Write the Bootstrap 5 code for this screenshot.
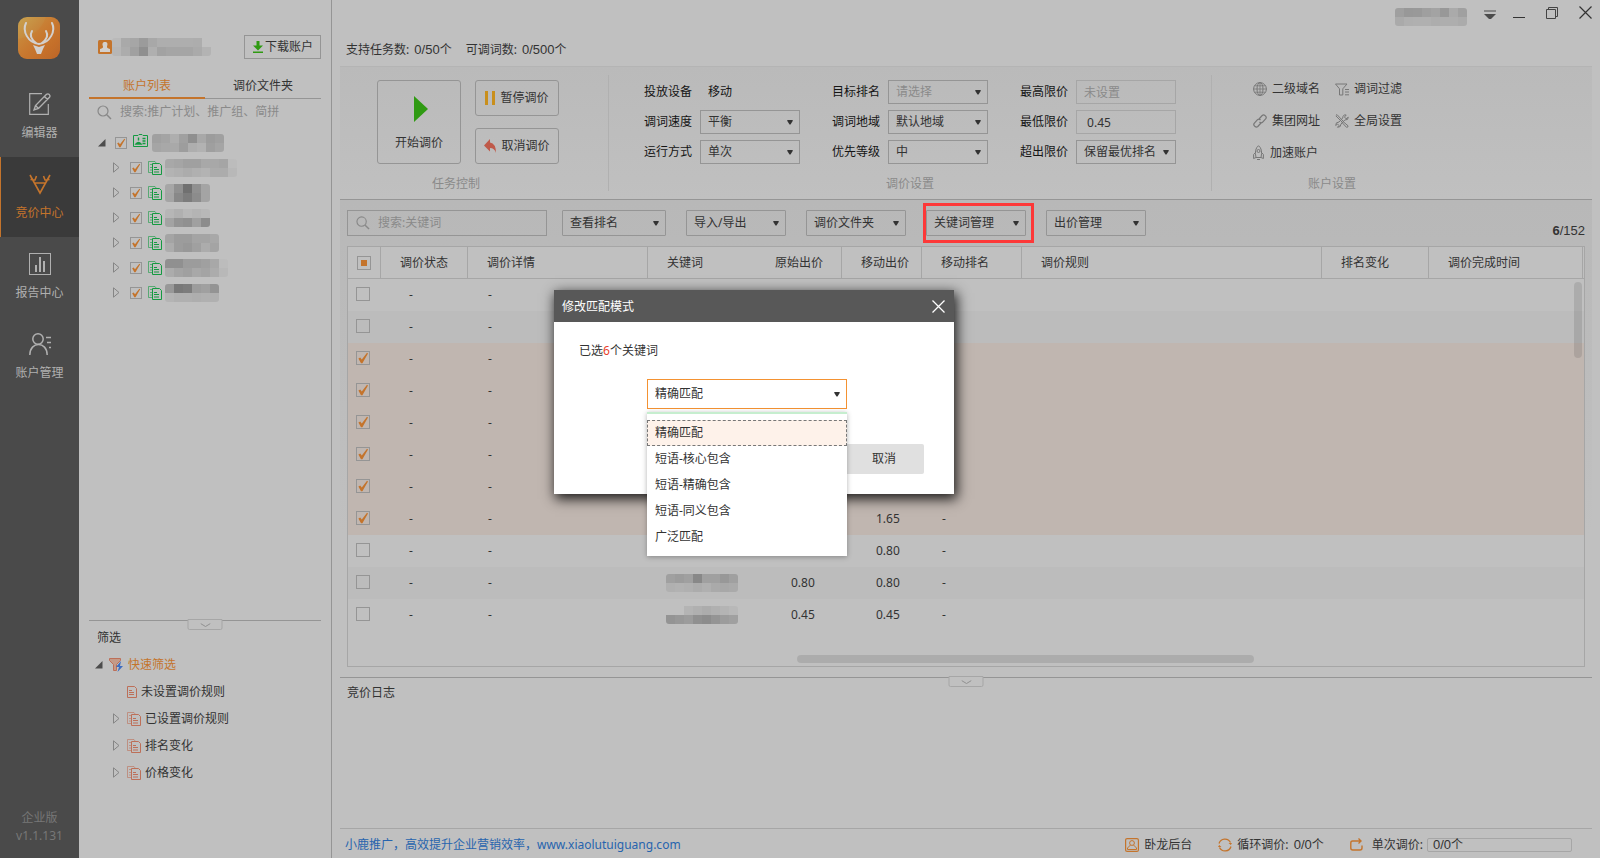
<!DOCTYPE html>
<html lang="zh-CN">
<head>
<meta charset="utf-8">
<meta name="viewport" content="width=device-width, initial-scale=1">
<title>竞价中心</title>
<link href="https://cdn.jsdelivr.net/npm/bootstrap@5.3.0/dist/css/bootstrap.min.css" rel="stylesheet">
<style>
:root{--ink:#333;--line:#959595;--soft:#a6a6a6;--base:#c0c0c0;--accent:#c4742c;--dim:#8a8a8a}
body{font:12px/18px "Noto Sans","Noto Sans CJK SC",sans-serif;color:var(--ink);background:var(--base)}
svg{display:block;flex:none}
a{color:inherit;text-decoration:none}
.num{font-family:"Liberation Sans",sans-serif;font-size:13px}
/* navigation rail */
.rail{width:79px;background:#4a4a4a;color:#b0b0b0;padding-top:17px}
.rail .logo{margin:0 0 18px 18px}
.rail .nav-link{height:80px;padding:16px 0 0;color:#b0b0b0;border-radius:0;gap:9px;display:flex;flex-direction:column;align-items:center}
.rail .nav-link.active{background:#3a3a3a;color:var(--accent);box-shadow:inset 1px 0 var(--accent)}
.ver{color:#777;padding-bottom:13px}
/* account panel */
.side{width:253px;border-right:1px solid var(--line);padding:35px 10px 0}
.owner{padding-left:9px;margin-bottom:14px}
.plain{background:transparent;border:1px solid var(--line);color:var(--ink);font-size:12px;line-height:18px;padding:0;border-radius:0}
.plain:hover{background:#b8b8b8;color:var(--ink);border-color:var(--line)}
.dl{width:77px;height:24px;gap:1px}
.tabs .nav-link{height:26px;padding:4px 0 0;color:var(--ink);border-bottom:1px solid var(--line);border-radius:0;width:50%;text-align:center}
.tabs .nav-link.active{color:var(--accent);border-bottom:2px solid var(--accent)}
.find{background:transparent;border:0;padding:0;font-size:12px;line-height:18px;color:var(--ink);outline:0;box-shadow:none;border-radius:0;min-height:0}
.find:focus{background:transparent;box-shadow:none}
.find::placeholder,.blank::placeholder{color:var(--dim);opacity:1}
.tree{padding-left:9px;margin-top:9px}
.tree li{height:25px;display:flex;align-items:center;gap:3px}
.tree .twig{width:18px}
.tree .kid{padding-left:15px}
.tree .pic{margin-left:3px}
.filters{border-top:1px solid var(--line);height:238px;padding-top:8px;position:relative}
.filters li{height:27px;display:flex;align-items:center;gap:4px}
.filters li .twig{width:10px}
.grip{position:absolute;top:-2px;left:50%;transform:translateX(-50%);width:35px;height:11px;padding:0;border:1px solid var(--soft);border-radius:0 0 2px 2px;background:var(--base);display:flex;align-items:center;justify-content:center}
.tick{appearance:none;width:12px;height:12px;margin:0;border:1px solid var(--line);border-radius:0;background:transparent center/contain no-repeat;flex:none;display:block}
.tick:checked{background-color:transparent;border-color:var(--line);background-image:url("data:image/svg+xml,%3Csvg xmlns='http://www.w3.org/2000/svg' viewBox='0 0 12 12'%3E%3Cpath d='M1.4 6.4 3.200 5.400 4.800 7.600 10 .8 11 1.400 5.400 11.200 4 11.200Z' fill='%23c4742c'/%3E%3C/svg%3E")}
.tick.big{width:14px;height:14px}
.tick.some:checked{background-image:linear-gradient(var(--accent),var(--accent));background-size:6px 6px}
/* ribbon */
.work{padding:0 8px}
.topbar{height:33px;gap:17px}
.topbar button{border:0;background:none;padding:0}
.counts{height:33px;padding:0 6px;gap:14px}
.counts .num,.status .num{margin-left:2px}
.ribbon{border-top:1px solid #b4b4b4;border-bottom:1px solid var(--line);background:linear-gradient(#bababa,#c0c0c0);height:134px}
.sep{width:1px;background:#b0b0b0;margin:8px 0}
.group{padding-top:13px}
.cap{color:var(--dim);margin-top:11px;text-align:center}
.tool{border-radius:3px;width:84px;height:36px}
.tool.tall{height:84px}
.field{display:flex;align-items:center;gap:8px;color:#151515;height:24px}
.pick,.blank{appearance:none;height:24px;width:100px;padding:0 0 0 7px;font-size:12px;line-height:18px;border:1px solid var(--line);border-radius:0;color:var(--ink);background-color:transparent}
.pick,.menu{background-image:url("data:image/svg+xml,%3Csvg xmlns='http://www.w3.org/2000/svg' viewBox='0 0 6 5'%3E%3Cpath d='M.3 0h5.400v1L3.500 4.500h-1L.3 1z' fill='%23333'/%3E%3C/svg%3E");background-repeat:no-repeat;background-size:6px 5px;background-position:right 6px center}
.blank{border-color:var(--soft)}
.pick.none{color:var(--dim)}
.menu,.pick.wide{height:26px;text-align:left;padding-left:7px;border-radius:1px}
.menu{width:100px}
.links{display:grid;grid-template-columns:82px 1fr;row-gap:16px;height:84px;align-content:start;padding:1px 0 0 41px}
.links a{display:flex;align-items:center;gap:5px;height:16px}
/* keyword grid */
.desk{background:linear-gradient(#b8b8b8,#c0c0c0 70%);padding:10px 7px}
.bar{height:30px;margin-bottom:6px}
.seek{width:200px;height:26px;border:1px solid var(--line);padding-left:8px;gap:8px}
.mark-box{position:relative}
.mark-box::after{content:"";position:absolute;inset:-7px -8px -7px -3px;border:3px solid #fd3838;pointer-events:none}
.sheet{border:1px solid var(--soft);background:var(--base);position:relative;padding-bottom:35px}
.sheet table{table-layout:fixed;width:100%;margin:0;border-collapse:separate;border-spacing:0}
.sheet th{height:32px;padding:1px 0 0 19px;font-weight:400;border-right:1px solid var(--soft);border-bottom:1px solid var(--soft);white-space:nowrap}
.sheet th.open{border-right:0}
.sheet th:first-child{padding-left:9px}
.sheet td{height:32px;padding:0 0 0 20px}
.sheet td:first-child{padding:0 0 2px 8px}
.sheet tr.alt{background:#bcbcbc}
.sheet tr.on{background:#c0b6b0}
.sheet td:nth-child(2){padding-left:28px}
.sheet td:nth-child(5){padding-left:35px}
.sheet td:nth-child(6){padding-left:34px}
.sheet td:nth-child(4){padding-left:18px}
.thumb{position:absolute;background:rgba(0,0,0,.1);border-radius:5px}
.thumb.v{right:2px;top:35px;width:8px;height:76px}
.thumb.h{left:449px;bottom:3px;width:37%;height:8px}
.log{border-top:1px solid var(--line);padding:6px 7px;position:relative}
.status{border-top:1px solid var(--soft);height:30px;padding-top:2px}
.meter-box{width:145px;height:14px;border:1px solid var(--soft);border-radius:2px;padding-left:3px;line-height:12px;margin-right:20px}
/* dialog over the page */
.dlg{position:absolute;left:554px;top:290px;width:400px;height:204px;background:#fff;box-shadow:2px 4px 12px 1px rgba(0,0,0,.85)}
.dlg-head{height:32px;background:#585858;color:#fff;padding:1px 9px 0 8px}
.dlg-head button{border:0;background:none;padding:0}
.dlg-body{padding:20px 30px 20px 25px}
.match{position:relative;width:200px;margin:19px 0 35px 68px}
.match .pick{width:200px;height:30px;border-color:#f49232}
.opts{position:absolute;top:33px;left:0;width:200px;padding:6px 0;background:#fff;border-top:2px solid #c6eecf;box-shadow:0 1px 5px rgba(0,0,0,.3);z-index:2}
.opts li{height:26px;padding:3px 7px;border:1px dashed transparent}
.opts li.cur{background:#fef2ea;border-color:#777}
.no{width:80px;height:30px;border:0;background:#e0e0e0;border-radius:2px;font-size:12px;padding:0;color:var(--ink)}
</style>
</head>
<body>
<svg width="0" height="0" class="position-absolute" aria-hidden="true">
  <defs>
    <symbol id="shut" viewBox="0 0 7 11"><path d="M.5.8v9.4L6 5.5z" fill="none" stroke="#858585"/></symbol>
    <symbol id="open" viewBox="0 0 8 8"><path d="M7.5 0v7.5H0z" fill="#4c4c4c"/></symbol>
    <symbol id="pages" viewBox="0 0 14 14"><path d="M4 11.500H.5v-11H7L8.500 2.500M2 3.500h2M2 6.500h2M2 9h2" fill="none" stroke="currentColor" opacity=".6"/><path d="M4.500 2.500h7l2 2v9h-9z" fill="none" stroke="currentColor"/><path d="M6 6.500h3M6 8.500h5M6 11h5" stroke="currentColor"/></symbol>
    <symbol id="page" viewBox="0 0 10 12"><path d="M.5.5H7.500l2 2v9h-9z" fill="none" stroke="currentColor"/><path d="M2 4.500h3M2 6.500h5M2 8.500h5" stroke="currentColor"/></symbol>
    <symbol id="lens" viewBox="0 0 15 15"><circle cx="6" cy="6" r="5" fill="none" stroke="#888" stroke-width="1.200"/><path d="m9.800 9.800 4.200 4.200" stroke="#888" stroke-width="1.500"/></symbol>
    <symbol id="fold" viewBox="0 0 10 4"><path d="m0 .5 5 3 5-3" fill="none" stroke="#909090"/></symbol>
  </defs>
</svg>
<div class="d-flex min-vh-100">
  <aside class="rail d-flex flex-column flex-shrink-0">
    <svg class="logo" width="42" height="42" viewBox="0 0 42 42"><defs><linearGradient id="lg" x1="0" y1="0" x2="1" y2="1"><stop offset="0" stop-color="#c8a350"/><stop offset=".5" stop-color="#c67c35"/><stop offset="1" stop-color="#bd6425"/></linearGradient></defs><rect width="42" height="42" rx="9" fill="url(#lg)"/><path d="M0 22Q22 18 28 0h5a9 9 0 0 1 9 9v14Q32 42 14 42H9a9 9 0 0 1-9-9z" fill="#d06e20" opacity=".2"/><g fill="none" stroke="#d3d0cd" stroke-width="2" stroke-linecap="round"><path d="M8 6C4 14 10 26 21 27 32 26 38 14 34 6"/><path d="M14 14c-3 5 0 9 4 12M28 14c3 5 0 9-4 12"/></g><path d="m15 28 6 2 6-2-2 4-2 5h-4l-2-5z" fill="#d3d0cd"/></svg>
    <nav class="nav flex-column">
      <a class="nav-link" href="#"><svg width="22" height="22" viewBox="0 0 22 22" fill="none" stroke="currentColor"><path d="M13 .7H.7v20.600h18.600V11" stroke-width="1.200"/><path d="m5 17 1.500-4.500L17.500 1.300q1.500-1 2.800.3 1.200 1.300.2 2.600L9.500 15.500zM15.500 3.500l3 3M6.500 12.500l3 3" stroke-width="1.400"/></svg>编辑器</a>
      <a class="nav-link active" href="#"><svg width="22" height="22" viewBox="0 0 22 22" fill="none" stroke="currentColor" stroke-width="1.600"><path d="m1 2 10 18L21 2M5.500 10h11M1.500 6.500 6 7 7.500 3M20.500 6.500 16 7l-1.500-4"/></svg>竞价中心</a>
      <a class="nav-link" href="#"><svg width="22" height="22" viewBox="0 0 22 22" fill="none" stroke="currentColor"><rect x=".5" y=".5" width="21" height="21"/><path d="M7 12v7M11 4v15M15 8v11" stroke-width="2"/></svg>报告中心</a>
      <a class="nav-link" href="#"><svg width="22" height="22" viewBox="0 0 22 22" fill="none" stroke="currentColor" stroke-width="1.500"><circle cx="9" cy="6" r="5.200"/><path d="M.8 22c0-14 17.400-14 17.400 0M17 4.500h5M18 9.500h4M20 14.500h2" /></svg>账户管理</a>
    </nav>
    <div class="ver mt-auto text-center">企业版<br>v1.1.131</div>
  </aside>

  <section class="side d-flex flex-column flex-shrink-0">
    <div class="owner d-flex align-items-center">
      <svg width="14" height="14" viewBox="0 0 14 14"><rect width="14" height="14" rx="1.500" fill="#c4742c"/><path d="M7 2c2.500 0 3 2 2 4.500Q8.500 8 12 9v3H2V9q3.500-1 3-2.500C4 4 4.500 2 7 2z" fill="#d3d0cd"/></svg>
      <svg class="mosaic" data-a="b9a9a69ba8aeaeaeaeadc0" data-b="b6aca08fafa2a5a5a5aab3"></svg>
      <button class="plain dl btn ms-auto d-flex align-items-center justify-content-center" type="button"><svg width="12" height="12" viewBox="0 0 12 12"><path d="M4.500 0h3v4.500H11L6 9.500 1 4.500h3.500zM1 10.500h10V12H1z" fill="#2f9a12"/></svg>下载账户</button>
    </div>
    <nav class="tabs nav flex-nowrap"><a class="nav-link active" href="#">账户列表</a><a class="nav-link" href="#">调价文件夹</a></nav>
    <label class="d-flex align-items-center ps-2 pt-1 gap-2"><svg width="15" height="15"><use href="#lens"/></svg><input class="find w-100" type="text" placeholder="搜索:推广计划、推广组、简拼" aria-label="搜索"></label>
    <ul class="tree list-unstyled mb-0" id="tree">
      <li><span style="width:14px"><svg width="8" height="8"><use href="#open"/></svg></span><input class="tick" type="checkbox" checked aria-label="全部账户"><span class="d-flex pic"><svg width="15" height="13" viewBox="0 0 15 13" fill="none" stroke="#149a41"><path d="M.5 1.500H5l1-1h3l1 1h4.500v11H.5z"/><path d="M3 10q2.500-3 5 0zM9.500 4.500h3M9.500 7h3M9.500 9.500h3M5.500 3.500v3" stroke-width="1.400"/></svg><svg class="mosaic ms-1" data-a="a0a4aea08fa89ca0" data-b="a5a8a99daeb29fa5"></svg></span></li>
    </ul>
    <div class="filters mt-auto">
      <button class="grip" type="button" aria-label="收起"><svg width="10" height="4"><use href="#fold"/></svg></button>
      <div class="ps-2 mb-1">筛选</div>
      <ul class="list-unstyled mb-0">
        <li style="padding-left:6px"><span class="twig"><svg width="8" height="8"><use href="#open"/></svg></span><svg width="15" height="14" viewBox="0 0 15 14"><path d="M.5.5h11v2l-4 4v6H4.500v-6l-4-4z" fill="#c49a88" stroke="#bd6f58"/><path d="m12 3-5 6h3l-1.500 5L14 8h-3z" fill="#3c6cc0"/></svg><a href="#" style="color:var(--accent)">快速筛选</a></li>
        <li class="ps-4"><span class="twig"></span><svg style="color:#bd6f58" width="10" height="12"><use href="#page"/></svg>未设置调价规则</li>
        <li class="ps-4"><span class="twig"><svg width="7" height="11"><use href="#shut"/></svg></span><svg style="color:#bd6f58" width="14" height="14"><use href="#pages"/></svg>已设置调价规则</li>
        <li class="ps-4"><span class="twig"><svg width="7" height="11"><use href="#shut"/></svg></span><svg style="color:#bd6f58" width="14" height="14"><use href="#pages"/></svg>排名变化</li>
        <li class="ps-4"><span class="twig"><svg width="7" height="11"><use href="#shut"/></svg></span><svg style="color:#bd6f58" width="14" height="14"><use href="#pages"/></svg>价格变化</li>
      </ul>
    </div>
  </section>

  <main class="work flex-grow-1 d-flex flex-column" style="min-width:0">
    <div class="topbar d-flex justify-content-end">
      <div class="d-flex" style="gap:17px">
        <svg class="mosaic mt-2" data-a="9f98999fa398aaa0" data-b="aaafb0b0adaeaeab"></svg>
        <button class="pb-1" type="button" aria-label="菜单"><svg width="12" height="10" viewBox="0 0 12 10"><path d="M0 1h12" stroke="#4c4c4c"/><path d="M0 4h12L7 9H5z" fill="#4c4c4c"/></svg></button>
      </div>
      <div class="d-flex" style="gap:21px">
        <button type="button" aria-label="最小化"><svg width="12" height="3"><path d="M0 2.500h12" stroke="#333"/></svg></button>
        <button class="pb-2" type="button" aria-label="还原"><svg width="12" height="12" viewBox="0 0 12 12" fill="none" stroke="#444"><path d="M.5 2.500h9v9h-9zM2.500 2.500v-2h9v9h-2"/></svg></button>
        <button class="pb-2" type="button" aria-label="关闭"><svg width="13" height="13" viewBox="0 0 13 13" stroke="#333" stroke-width="1.200"><path d="m.5.5 12 12M12.500.5l-12 12"/></svg></button>
      </div>
    </div>
    <div class="counts d-flex align-items-center"><span>支持任务数: <span class="num">0/50</span>个</span><span>可调词数: <span class="num">0/500</span>个</span></div>

    <div class="ribbon d-flex">
      <div class="group" style="width:268px;padding-left:37px">
        <div class="d-flex" style="gap:14px">
          <button class="btn plain tool tall d-flex flex-column align-items-center justify-content-center gap-2" type="button"><svg class="mt-1 mb-1 ms-1" width="14" height="26"><path d="M0 0v26l14-13z" fill="#2f9a12"/></svg>开始调价</button>
          <div class="d-flex flex-column justify-content-between">
            <button class="btn plain tool d-flex align-items-center justify-content-center" style="gap:5px" type="button"><svg width="10" height="14"><path d="M0 0h3v14H0zM7 0h3v14H7z" fill="#c98f1c"/></svg>暂停调价</button>
            <button class="btn plain tool d-flex align-items-center justify-content-center" style="gap:5px" type="button"><svg width="12" height="14" viewBox="0 0 12 14"><path d="M6 0v3.500q6 1 6 10.500Q10.500 9 6 9v3.500L0 6.500z" fill="#bf5a4a"/></svg>取消调价</button>
          </div>
        </div>
        <div class="cap pe-4" style="width:182px">任务控制</div>
      </div>
      <div class="sep"></div>
      <div class="group" style="width:602px">
        <div class="d-flex" style="gap:32px;padding-left:35px">
          <div class="d-grid" style="gap:6px">
            <div class="field"><span>投放设备</span><span class="ms-2 ps-0">移动</span></div>
            <label class="field">调词速度<select class="pick"><option>平衡</option></select></label>
            <label class="field">运行方式<select class="pick"><option>单次</option></select></label>
          </div>
          <div class="d-grid" style="gap:6px">
            <label class="field">目标排名<select class="pick none"><option>请选择</option></select></label>
            <label class="field">调词地域<select class="pick"><option>默认地域</option></select></label>
            <label class="field">优先等级<select class="pick"><option>中</option></select></label>
          </div>
          <div class="d-grid" style="gap:6px">
            <label class="field">最高限价<input class="blank" type="text" placeholder="未设置"></label>
            <label class="field">最低限价<input class="blank" style="padding-left:10px" type="text" value="0.45"></label>
            <label class="field">超出限价<select class="pick"><option>保留最优排名</option></select></label>
          </div>
        </div>
        <div class="cap">调价设置</div>
      </div>
      <div class="sep"></div>
      <div class="group" style="width:240px">
        <div class="links">
          <a href="#"><svg width="14" height="14" viewBox="0 0 14 14" fill="none" stroke="#777"><circle cx="7" cy="7" r="6.400"/><ellipse cx="7" cy="7" rx="3" ry="6.400"/><path d="M7 .5v13M.5 7h13M1.500 3.800h11M1.500 10.200h11" stroke-width=".8"/></svg>二级域名</a>
          <a href="#"><svg width="14" height="13" viewBox="0 0 14 13" fill="none" stroke="#777"><path d="M.5 1h11.500L7.800 5.800V12H4.500V5.800zM10 6.500h4M10 9h4M10 11.800h4"/></svg>调词过滤</a>
          <a href="#"><svg width="14" height="14" viewBox="0 0 14 14" fill="none" stroke="#777" stroke-width="1.200"><path d="M6 5 9.200 1.500Q10.500.3 12 1.500q2 1.500.8 3.200L9.500 8.300Q8 9.500 6.500 8M8 9 4.800 12.500Q3.500 13.700 2 12.500 0 11 1.200 9.300L4.500 5.700Q6 4.500 7.500 6"/></svg>集团网址</a>
          <a href="#"><svg width="14" height="14" viewBox="0 0 14 14" fill="none" stroke="#777"><path d="M.8 1.500 2 .6l6.500 7 M1 2l6.500 6.500M8 7.500l5 4.300q.5 1.500-1.500 1.500L7 8.500M13.300 3.200 11 4.800 9.500 3l1.700-2Q8 .2 7.700 4L4 8Q.5 8 .7 11.500L2.500 10 4 11.500 2.500 13.300Q6 13.500 6 10L9.800 6q3.700.2 3.500-2.800z"/></svg>全局设置</a>
          <a href="#" style="gap:6px"><svg width="11" height="16" viewBox="0 0 11 16" fill="none" stroke="#777"><path d="M3 12.500Q1 4 5.500.7 10 4 8 12.500zM2.500 7.500.6 9.500v4L3 12.500M8.500 7.500l1.900 2v4L8 12.500M4 14.500h3"/><circle cx="5.500" cy="6" r="1.500"/></svg>加速账户</a>
        </div>
        <div class="cap">账户设置</div>
      </div>
    </div>

    <div class="desk">
      <div class="bar d-flex align-items-start">
        <label class="seek d-flex align-items-center"><svg width="14" height="14"><use href="#lens"/></svg><input class="find w-100" type="text" placeholder="搜索:关键词" aria-label="搜索关键词"></label>
        <select class="pick wide" style="width:104px;margin-left:15px" aria-label="查看排名"><option>查看排名</option></select>
        <div class="d-flex" style="gap:20px;margin-left:20px">
          <button class="plain menu" type="button">导入/导出</button>
          <button class="plain menu" type="button">调价文件夹</button>
          <span class="mark-box"><button class="plain menu" type="button">关键词管理</button></span>
          <button class="plain menu" type="button">出价管理</button>
        </div>
        <span class="num ms-auto align-self-end"><b>6</b>/152</span>
      </div>
      <div class="sheet">
        <table>
          <colgroup><col style="width:33px"><col style="width:87px"><col style="width:180px"><col style="width:108px"><col style="width:86px"><col style="width:80px"><col style="width:100px"><col><col style="width:107px"><col style="width:154px"><col style="width:1px"></colgroup>
          <thead><tr><th><input class="tick big some" type="checkbox" checked aria-label="全选"></th><th>调价状态</th><th>调价详情</th><th class="open">关键词</th><th>原始出价</th><th>移动出价</th><th>移动排名</th><th>调价规则</th><th>排名变化</th><th>调价完成时间</th><th class="open p-0"></th></tr></thead>
          <tbody id="rows"></tbody>
        </table>
        <div class="thumb v"></div><div class="thumb h"></div>
      </div>
    </div>

    <section class="log flex-grow-1">
      <button class="grip" type="button" aria-label="收起"><svg width="10" height="4"><use href="#fold"/></svg></button>
      竞价日志
    </section>
    <footer class="status d-flex align-items-center">
      <a class="me-auto" href="#" style="color:#2764ae;margin-left:5px">小鹿推广，高效提升企业营销效率，www.xiaolutuiguang.com</a>
      <a class="d-flex align-items-center" style="gap:5px" href="#"><svg width="14" height="14" viewBox="0 0 14 14" fill="none" stroke="#c4742c"><rect x=".6" y=".6" width="12.800" height="12.800" rx="1.500" stroke-width="1.200"/><circle cx="7" cy="5" r="2.400"/><path d="M5.500 7 2.500 10v1.500h9V10l-3-3"/></svg>卧龙后台</a>
      <span class="d-flex align-items-center" style="gap:5px;margin-left:26px"><svg width="14" height="14" viewBox="0 0 14 14" fill="none" stroke="#c4742c" stroke-width="1.300"><path d="M1 5.500a6.200 6.200 0 0 1 11.500-1M13 8.500a6.200 6.200 0 0 1-11.500 1"/><path d="M10.500 5H14L12.800 7zM0 9h3.500L1.200 7z" fill="#c4742c" stroke="none"/></svg><span>循环调价: <span class="num">0/0</span>个</span></span>
      <span class="d-flex align-items-center" style="gap:9px;margin-left:26px"><svg width="13" height="13" viewBox="0 0 13 13" fill="none" stroke="#c4742c" stroke-width="1.400"><path d="M5 3H2.500Q.8 3 .8 5v5q0 2 2 2H10q2 0 2-2V7.500M5 3h6M8.500.5 11 3 8.500 5.500"/></svg>单次调价:</span>
      <span class="meter-box ms-1"><span class="num">0/0</span>个</span>
    </footer>
  </main>
</div>

<div class="dlg" role="dialog" aria-label="修改匹配模式">
  <div class="dlg-head d-flex align-items-center justify-content-between"><span>修改匹配模式</span><button type="button" aria-label="关闭"><svg width="13" height="13" viewBox="0 0 13 13" stroke="#fff" stroke-width="1.300"><path d="m.5.5 12 12M12.500.5l-12 12"/></svg></button></div>
  <div class="dlg-body">
    <div>已选<span style="color:#e8402c">6</span>个关键词</div>
    <div class="match">
      <select class="pick d-block" aria-label="匹配模式"><option>精确匹配</option></select>
      <ul class="opts list-unstyled mb-0" role="listbox"><li class="cur" role="option">精确匹配</li><li role="option">短语-核心包含</li><li role="option">短语-精确包含</li><li role="option">短语-同义包含</li><li role="option">广泛匹配</li></ul>
    </div>
    <div class="text-end"><button class="no" type="button">取消</button></div>
  </div>
</div>

<script src="https://cdn.jsdelivr.net/npm/bootstrap@5.3.0/dist/js/bootstrap.bundle.min.js"></script>
<script>
// child campaigns: two strips of grey levels stand for each masked name
const names = [
  ['a8a5a0a0a8a8a5bc', 'b3b0acb0b3acacb8'],
  ['a6907090a4', 'a4887c8ca4'],
  ['b6b0b8b4b8', 'a39490a08c'],
  ['a49c9ca4a4a8', 'ac9c98a0aca4'],
  ['90909c9ca0a8bc', 'aca4a0a8a4acb8'],
  ['98787c9ca094', 'b4b0b0aeb0b0']
];
const tree = document.getElementById('tree');
names.forEach(([a, b], i) => tree.insertAdjacentHTML('beforeend',
  `<li class="kid"><span style="width:14px"><svg width="7" height="11"><use href="#shut"/></svg></span><input class="tick" type="checkbox" checked aria-label="推广计划 ${i + 1}"><span class="d-flex pic"><svg style="color:#149a41" width="14" height="14"><use href="#pages"/></svg></span><svg class="mosaic" data-a="${a}" data-b="${b}"></svg></li>`));

const bids = [['', ''], ['', ''], ['', ''], ['', ''], ['', ''], ['', ''], ['', ''], ['', '1.65'], ['', '0.80'], ['0.80', '0.80'], ['0.45', '0.45']];
const masks = { 9: ['a09ca088a0a098a0', 'b0b2b0acb0aaa8aa'], 10: ['c0c0b4b0acb0b4b8', '94989c908c949ca0'] };
document.getElementById('rows').innerHTML = bids.map(([was, now], i) => {
  const on = i > 1 && i < 8;
  const m = masks[i] ? `<svg class="mosaic" data-a="${masks[i][0]}" data-b="${masks[i][1]}"></svg>` : '';
  return `<tr class="${on ? 'on' : i % 2 ? 'alt' : ''}"><td><input class="tick big" type="checkbox" ${on ? 'checked' : ''} aria-label="第${i + 1}行"></td><td>-</td><td>-</td><td>${m}</td><td>${was}</td><td>${now}</td><td>${now ? '-' : ''}</td><td></td><td></td><td></td><td class="p-0"></td></tr>`;
}).join('');

// each pair of hex digits is one 9px cell
document.querySelectorAll('.mosaic').forEach(s => {
  const n = s.dataset.a.length / 2;
  s.setAttribute('width', n * 9);
  s.setAttribute('height', 18);
  s.style.borderRadius = '3px';
  [s.dataset.a, s.dataset.b].forEach((row, y) => row.match(/../g).forEach((c, x) => {
    const r = document.createElementNS('http://www.w3.org/2000/svg', 'rect');
    r.setAttribute('x', x * 9); r.setAttribute('y', y * 9);
    r.setAttribute('width', 9); r.setAttribute('height', 9);
    r.setAttribute('fill', '#' + c + c + c);
    s.append(r);
  }));
});
</script>
</body>
</html>
